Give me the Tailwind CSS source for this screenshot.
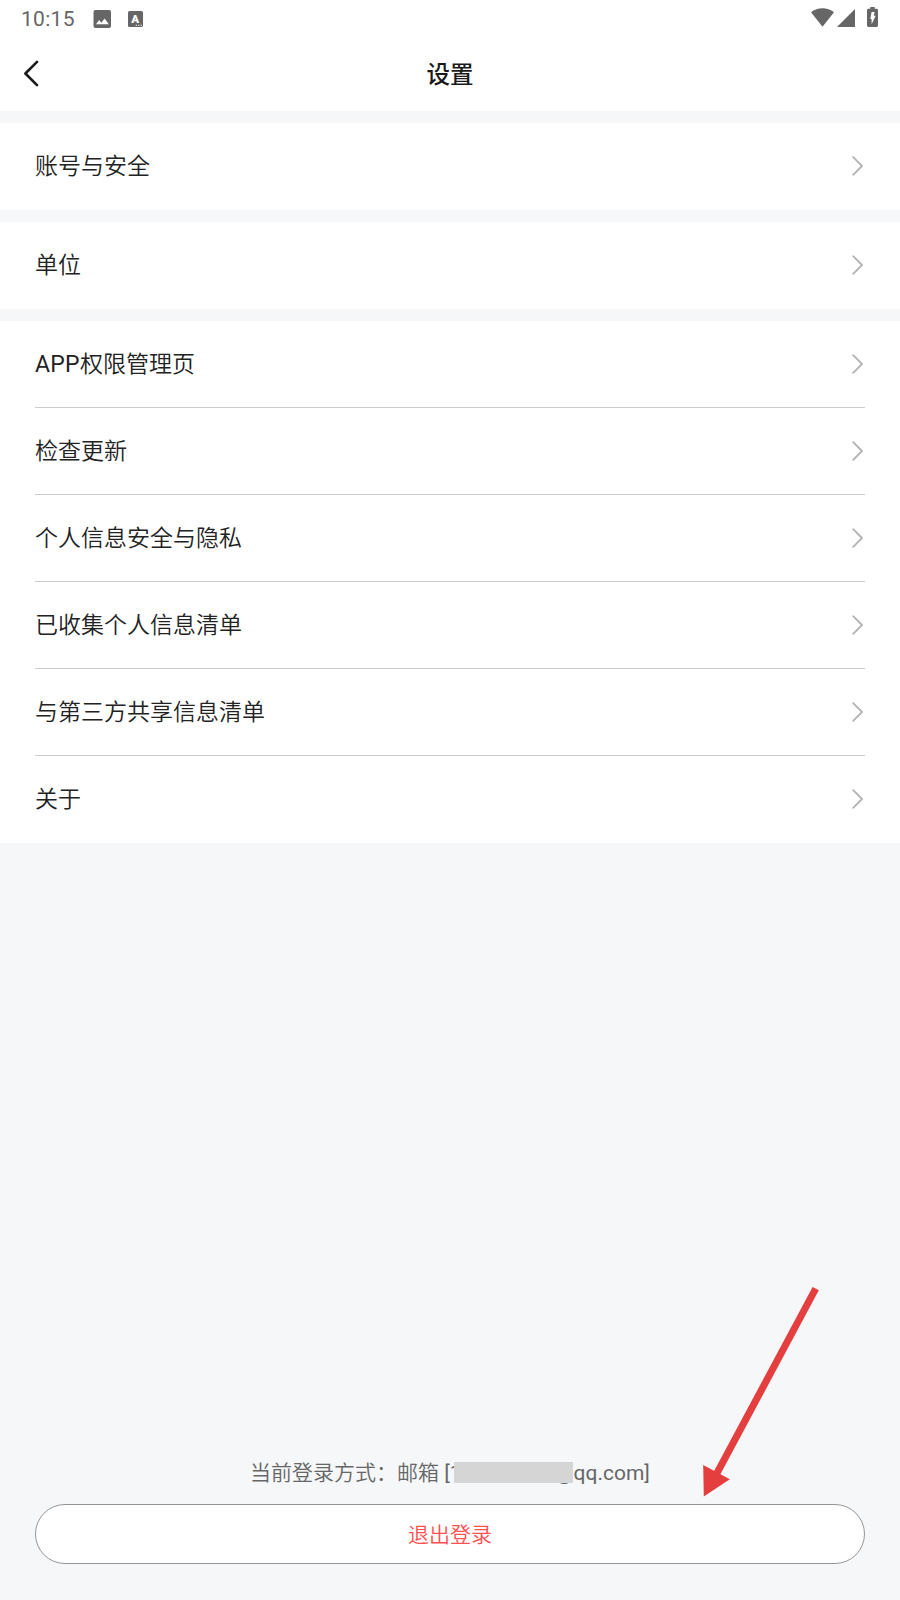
<!DOCTYPE html>
<html lang="zh-CN">
<head>
  <meta charset="UTF-8" />
  <meta name="viewport" content="width=device-width, initial-scale=1.0"/>
  <title>设置</title>

  <!-- Tailwind CSS -->
  <script src="https://cdn.jsdelivr.net/npm/@tailwindcss/browser@4"></script>

  <style>
    body {
      font-family: Roboto, 'Noto Sans CJK SC', sans-serif;
    }
    .thin-cjk {
      font-family: Roboto, 'Noto Sans CJK SC DemiLight', 'Noto Sans CJK SC', sans-serif;
    }
  </style>
</head>
<body class="relative flex flex-col w-[900px] h-[1600px] overflow-hidden bg-[#f5f7f9] text-[#222222]">

  <!-- Shared row chevron -->
  <svg class="hidden">
    <symbol id="chevron" viewBox="0 0 12 20">
      <path d="M1.2 1.2L10 10L1.2 18.8" fill="none" stroke="#b3b3b3" stroke-width="1.8" stroke-linecap="round" stroke-linejoin="round"/>
    </symbol>
  </svg>

  <header class="h-[111px] shrink-0 bg-white">
    <!-- Status bar -->
    <div class="h-[37px] flex items-center justify-between pl-[21px] pr-[22px] text-[#666666]">
      <div class="flex items-center">
        <span class="w-[72px] pt-px text-[21px] leading-none tracking-[0.3px]">10:15</span>
        <svg class="w-[18px] h-[18px]" viewBox="0 0 18 18">
          <rect x="0.5" width="17.5" height="18" rx="2" fill="currentColor"/>
          <path d="M2.9 14.2L6.1 10L8.4 12.7L11.6 8.4L15.8 14.2Z" fill="#ffffff"/>
        </svg>
        <svg class="w-[15px] h-[16px] ml-[17px]" viewBox="0 0 15 16">
          <rect width="15" height="16" rx="1.6" fill="currentColor"/>
          <text x="7.2" y="11.6" text-anchor="middle" font-family="Roboto" font-size="11.5" font-weight="900" fill="#ffffff">A</text>
          <path d="M7.7 14.3h1.2M10.2 14.3h1.2M12.7 14.3h1.2" stroke="#ffffff" stroke-width="1.1"/>
        </svg>
      </div>
      <div class="flex items-center pb-[3px]">
        <svg class="w-[23px] h-[19px]" viewBox="0 0 23 19">
          <path d="M0 4.2C6.3 -1.2 16.7 -1.2 23 4.2L11.5 18.7Z" fill="currentColor"/>
        </svg>
        <svg class="w-[18px] h-[18px] ml-[3px] mt-px" viewBox="0 0 18 18">
          <path d="M18 0V18H0Z" fill="currentColor"/>
        </svg>
        <svg class="w-[11px] h-5 ml-3" viewBox="0 0 11 20">
          <path d="M3.3 0H7.7V1.8H9.6Q11 1.8 11 3.2V18.6Q11 20 9.6 20H1.4Q0 20 0 18.6V3.2Q0 1.8 1.4 1.8H3.3Z" fill="currentColor"/>
          <path d="M4.6 5H7.6L6.7 8.8H8.7L4.6 17.2V12H3.3Z" fill="#ffffff"/>
        </svg>
      </div>
    </div>

    <!-- Title bar -->
    <div class="grid grid-cols-[1fr_auto_1fr] h-[74px] items-center px-6">
      <svg class="w-[15px] h-[27px] mb-px" viewBox="0 0 15 27">
        <path d="M13 1.8L1.4 13.5L13 25.2" fill="none" stroke="#1a1a1a" stroke-width="2.6" stroke-linecap="round" stroke-linejoin="round"/>
      </svg>
      <h1 class="pt-[3px] text-[23.5px] leading-none font-medium text-[#1a1a1a]">设置</h1>
    </div>
  </header>

  <main class="thin-cjk flex flex-col gap-3 pt-3 text-[23px] leading-none">
    <section class="bg-white px-[35px]">
      <div class="h-[87px] flex items-center justify-between pb-px"><span class="pt-px">账号与安全</span><svg class="w-3 h-5 mr-px"><use href="#chevron"/></svg></div>
    </section>

    <section class="bg-white px-[35px]">
      <div class="h-[87px] flex items-center justify-between pb-px"><span class="pt-px">单位</span><svg class="w-3 h-5 mr-px"><use href="#chevron"/></svg></div>
    </section>

    <section class="bg-white px-[35px]">
      <div class="h-[87px] flex items-center justify-between border-b border-[#cccccc]"><span class="pt-px"><span class="tracking-[0.3px]">APP</span>权限管理页</span><svg class="w-3 h-5 mr-px"><use href="#chevron"/></svg></div>
      <div class="h-[87px] flex items-center justify-between border-b border-[#cccccc]"><span class="pt-px">检查更新</span><svg class="w-3 h-5 mr-px"><use href="#chevron"/></svg></div>
      <div class="h-[87px] flex items-center justify-between border-b border-[#cccccc]"><span class="pt-px">个人信息安全与隐私</span><svg class="w-3 h-5 mr-px"><use href="#chevron"/></svg></div>
      <div class="h-[87px] flex items-center justify-between border-b border-[#cccccc]"><span class="pt-px">已收集个人信息清单</span><svg class="w-3 h-5 mr-px"><use href="#chevron"/></svg></div>
      <div class="h-[87px] flex items-center justify-between border-b border-[#cccccc]"><span class="pt-px">与第三方共享信息清单</span><svg class="w-3 h-5 mr-px"><use href="#chevron"/></svg></div>
      <div class="h-[87px] flex items-center justify-between pb-px"><span class="pt-px">关于</span><svg class="w-3 h-5 mr-px"><use href="#chevron"/></svg></div>
    </section>
  </main>

  <footer class="thin-cjk mt-auto px-[35px] pb-9 text-[21px] leading-none">
    <div class="flex justify-center h-[41px] text-[#666666] whitespace-pre">
      <span>当前登录方式：邮箱 [1</span>
      <!-- Hidden part of the address -->
      <span class="relative w-[93px]"><span class="absolute -left-[8px] -top-px w-[119px] h-[21px] bg-[#d5d5d5]"></span></span>
      <span>@qq.com]</span>
    </div>
    <button class="block w-full h-[60px] pt-[2px] rounded-full border border-[#949698] bg-white text-[#ff5050]">退出登录</button>
  </footer>

  <!-- Arrow pointing at the logout button -->
  <svg class="absolute left-[700px] top-[1284px] w-[122px] h-[216px]" viewBox="0 0 122 216">
    <path d="M115.7 4.6L16.5 190" stroke="#e53e3e" stroke-width="7"/>
    <path d="M3.2 181L29.8 195.3L3.8 212.5Z" fill="#e53e3e"/>
  </svg>

</body>
</html>
